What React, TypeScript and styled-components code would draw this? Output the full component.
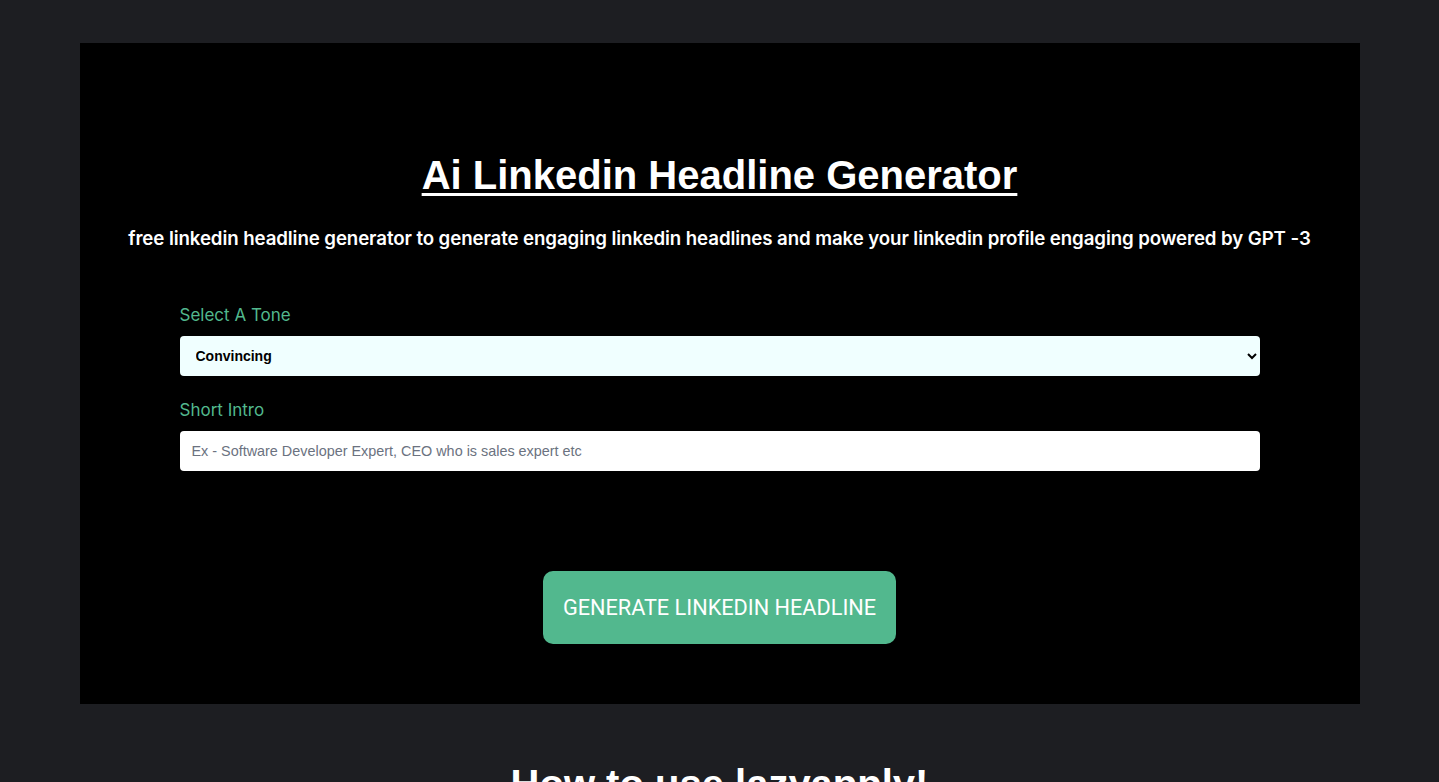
import React from "react";
import styled, { createGlobalStyle } from "styled-components";

const GlobalStyle = createGlobalStyle`
    html, body {
        margin: 0;
        padding: 0;
        background-color: #1d1e22;
        font-family: "Liberation Sans", Arial, sans-serif;
        overflow: hidden;
    }
`;

const Page = styled.main`
    display: flex;
    flex-direction: column;
    align-items: center;
    padding-top: 43px;
    min-height: 782px;
    box-sizing: border-box;
`;

const Card = styled.section`
    display: flex;
    flex-direction: column;
    align-items: center;
    width: 1280px;
    padding: 110px 0 60px;
    box-sizing: border-box;
    background-color: #000;
`;

const Title = styled.h1`
    margin: 0;
    font-family: "Liberation Sans", Arial, sans-serif;
    font-size: 40px;
    line-height: 44px;
    font-weight: 700;
    color: #fff;
    text-decoration: underline;
    text-underline-offset: 4px;
    text-decoration-thickness: 3px;
`;

const Subtitle = styled.p`
    margin: 30px 0 0;
    font-family: Inter, "Noto Sans", sans-serif;
    font-size: 18.7px;
    line-height: 24px;
    font-weight: 600;
    color: #fff;
    letter-spacing: -0.1px;
`;

const Form = styled.form`
    display: flex;
    flex-direction: column;
    width: 1080px;
    margin-top: 52px;
`;

const Label = styled.label<{ $first?: boolean }>`
    margin-top: ${(p) => (p.$first ? "0" : "22px")};
    font-family: Inter, "Noto Sans", sans-serif;
    font-size: 17px;
    line-height: 24px;
    color: #52b88e;
`;

const Select = styled.select`
    margin-top: 9px;
    height: 40px;
    padding: 0 8px 0 12px;
    border: none;
    border-radius: 4px;
    background-color: #f0ffff;
    font-family: "Liberation Sans", Arial, sans-serif;
    font-size: 14px;
    font-weight: 700;
    color: #000;
    outline: none;
`;

const Input = styled.input`
    margin-top: 9px;
    height: 40px;
    padding: 0 12px;
    border: none;
    border-radius: 4px;
    background-color: #fff;
    font-family: "Liberation Sans", Arial, sans-serif;
    font-size: 14.4px;
    color: #111;
    outline: none;
    box-sizing: border-box;
    &::placeholder {
        color: #6b7280;
    }
`;

const Button = styled.button`
    margin-top: 100px;
    height: 73px;
    padding: 0 20px;
    border: none;
    border-radius: 10px;
    background-color: #52b88e;
    color: #fff;
    font-family: Roboto, "Liberation Sans", sans-serif;
    font-size: 21.7px;
    font-weight: 400;
    cursor: pointer;
`;

const SectionHeading = styled.h2`
    margin: 58px 0 0;
    font-family: "Liberation Sans", Arial, sans-serif;
    font-size: 40px;
    line-height: 44px;
    font-weight: 700;
    color: #fff;
`;

const tones = ["Convincing", "Professional", "Friendly", "Witty", "Confident"];

export default function App() {
    return (
        <>
            <GlobalStyle />
            <Page>
                <Card>
                    <Title>Ai Linkedin Headline Generator</Title>
                    <Subtitle>
                        free linkedin headline generator to generate engaging linkedin headlines and make your
                        linkedin profile engaging powered by GPT -3
                    </Subtitle>
                    <Form onSubmit={(e) => e.preventDefault()}>
                        <Label $first>Select A Tone</Label>
                        <Select defaultValue="Convincing">
                            {tones.map((t) => (
                                <option key={t} value={t}>
                                    {t}
                                </option>
                            ))}
                        </Select>
                        <Label>Short Intro</Label>
                        <Input placeholder="Ex - Software Developer Expert, CEO who is sales expert etc" />
                    </Form>
                    <Button type="button">GENERATE LINKEDIN HEADLINE</Button>
                </Card>
                <SectionHeading>How to use lazyapply!</SectionHeading>
            </Page>
        </>
    );
}
